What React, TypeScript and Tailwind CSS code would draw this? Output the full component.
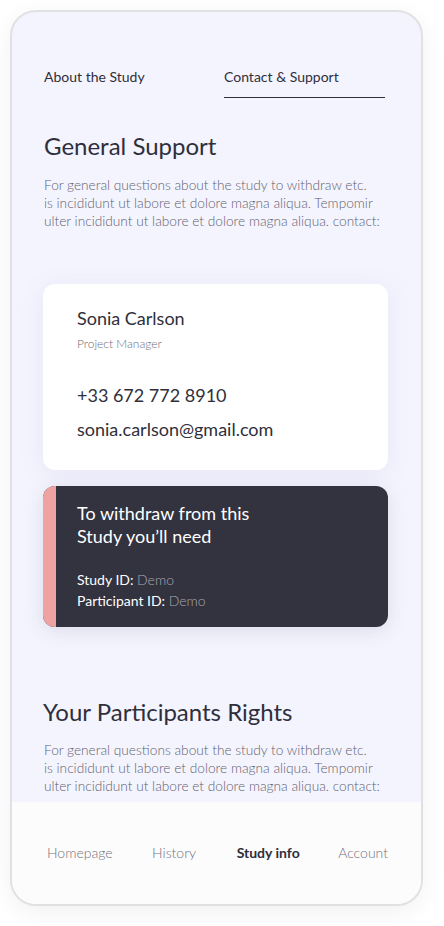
import React from "react";

function Para() {
  return (
    <p className="text-[13.7px] leading-[18px] text-[#62626e] font-light w-[340px] whitespace-nowrap">
      For general questions about the study to withdraw etc.
      <br />
      is incididunt ut labore et dolore magna aliqua. Tempomir
      <br />
      ulter incididunt ut labore et dolore magna aliqua. contact:
    </p>
  );
}

export default function App() {
  return (
    <div
      className="w-[444px] h-[926px] bg-white p-[10px]"
      style={{ fontFamily: "Lato, 'Open Sans', sans-serif" }}
    >
      <div className="w-[413px] h-[896px] border-2 border-[#e1e1e3] rounded-[26px] overflow-hidden flex flex-col bg-[#f4f4fe] shadow-[0_6px_24px_rgba(0,0,0,0.06)]">
        <main className="flex-1 overflow-hidden pl-[32px] pr-[33px] pt-[55px]">
          <div className="flex text-[14px] leading-[20px] text-[#2f2f3b]">
            <div className="w-[180px] pb-[10px]">About the Study</div>
            <div className="w-[161px] pb-[10px] border-b border-[#2f2f3b]">Contact &amp; Support</div>
          </div>

          <h2 className="mt-[32px] text-[24px] leading-[32px] text-[#2f2f3b]">General Support</h2>
          <div className="mt-[14px]">
            <Para />
          </div>

          <div className="mt-[54px] -ml-[1px] w-[345px] bg-white rounded-[12px] shadow-[0_4px_24px_rgba(120,120,200,0.10)] pl-[34px] pt-[22px] pb-[29px]">
            <div className="text-[18px] leading-[24px] text-[#2f2f3b]">Sonia Carlson</div>
            <div className="mt-[6px] text-[12px] leading-[16px] text-[#6e6e79] font-light">Project Manager</div>
            <div className="mt-[31px] text-[18px] leading-[24px] text-[#2f2f3b]">+33 672 772 8910</div>
            <div className="mt-[10px] text-[18px] leading-[24px] text-[#2f2f3b]">sonia.carlson@gmail.com</div>
          </div>

          <div className="mt-[16px] -ml-[1px] w-[345px] bg-[#33323f] rounded-[12px] overflow-hidden flex shadow-[0_4px_20px_rgba(60,60,90,0.12)]">
            <div className="w-[13px] bg-[#eea3a2]" />
            <div className="pl-[21px] pt-[16px] pb-[16px]">
              <div className="text-[18px] leading-[23px] text-white">
                To withdraw from this
                <br />
                Study you’ll need
              </div>
              <div className="mt-[21px] text-[14px] leading-[21px] text-white">
                <div>
                  Study ID: <span className="text-[#a8a7b2] font-light">Demo</span>
                </div>
                <div>
                  Participant ID: <span className="text-[#a8a7b2] font-light">Demo</span>
                </div>
              </div>
            </div>
          </div>

          <h2 className="mt-[69px] -ml-[1px] text-[24px] leading-[32px] text-[#2f2f3b]">Your Participants Rights</h2>
          <div className="mt-[13px]">
            <Para />
          </div>
        </main>
        <nav className="h-[102px] shrink-0 bg-[#fcfcfd] flex items-center justify-between pl-[35px] pr-[33px] text-[14px] leading-[20px] text-[#72727c] font-light -mt-px">
          <span>Homepage</span>
          <span className="ml-[1px]">History</span>
          <span className="text-[#2f2f3b] font-bold ml-[2px]">Study info</span>
          <span>Account</span>
        </nav>
      </div>
    </div>
  );
}
